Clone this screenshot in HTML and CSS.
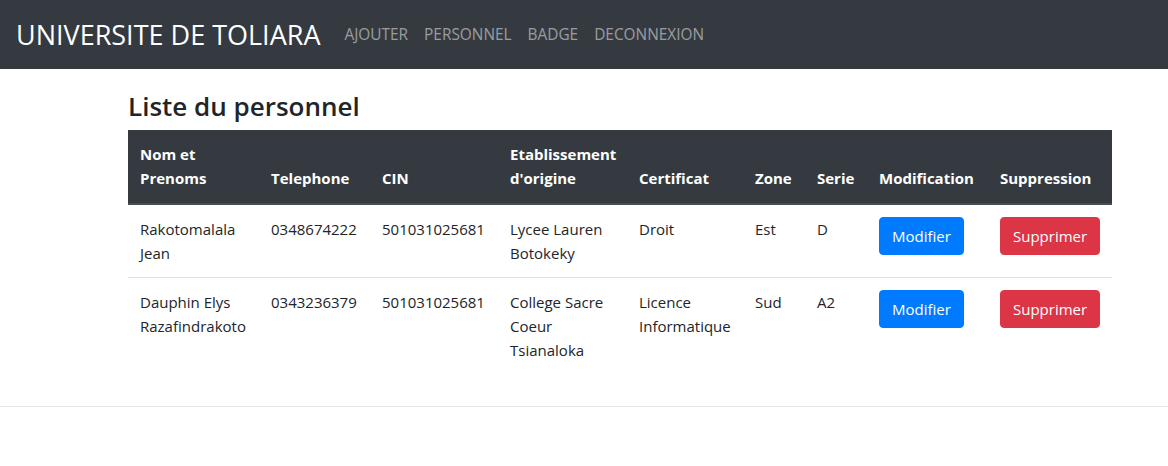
FILE: index.html
```html
<!DOCTYPE html>
<html lang="fr">
<head>
<meta charset="utf-8">
<title>Liste du personnel</title>
<link rel="stylesheet" href="styles.css">
</head>
<body>
<nav class="navbar">
  <a class="brand" href="#">UNIVERSITE DE TOLIARA</a>
  <ul class="nav-links">
    <li><a href="#">AJOUTER</a></li>
    <li><a href="#">PERSONNEL</a></li>
    <li><a href="#">BADGE</a></li>
    <li><a href="#">DECONNEXION</a></li>
  </ul>
</nav>
<main class="content">
  <h3 class="title">Liste du personnel</h3>
  <table class="table">
    <thead>
      <tr>
        <th class="c1">Nom et Prenoms</th>
        <th class="c2">Telephone</th>
        <th class="c3">CIN</th>
        <th class="c4">Etablissement d'origine</th>
        <th class="c5">Certificat</th>
        <th class="c6">Zone</th>
        <th class="c7">Serie</th>
        <th class="c8">Modification</th>
        <th class="c9">Suppression</th>
      </tr>
    </thead>
    <tbody>
      <tr>
        <td>Rakotomalala Jean</td>
        <td>0348674222</td>
        <td>501031025681</td>
        <td>Lycee Lauren Botokeky</td>
        <td>Droit</td>
        <td>Est</td>
        <td>D</td>
        <td><a class="btn btn-primary" href="#">Modifier</a></td>
        <td><a class="btn btn-danger" href="#">Supprimer</a></td>
      </tr>
      <tr>
        <td>Dauphin Elys Razafindrakoto</td>
        <td>0343236379</td>
        <td>501031025681</td>
        <td>College Sacre Coeur Tsianaloka</td>
        <td>Licence Informatique</td>
        <td>Sud</td>
        <td>A2</td>
        <td><a class="btn btn-primary" href="#">Modifier</a></td>
        <td><a class="btn btn-danger" href="#">Supprimer</a></td>
      </tr>
    </tbody>
  </table>
</main>
<hr class="footer-rule">
</body>
</html>
```

FILE: styles.css
```css
* { box-sizing: border-box; }

body {
  margin: 0;
  font-family: "Open Sans", "Noto Sans", "Liberation Sans", sans-serif;
  font-size: 16px;
  line-height: 1.5;
  color: #212529;
  background: #fff;
}

.navbar {
  display: flex;
  align-items: center;
  height: 69px;
  padding: 0 16px;
  background: #343a40;
}

.brand {
  font-size: 27px;
  line-height: 1.3;
  color: #fff;
  text-decoration: none;
  margin-right: 16px;
  white-space: nowrap;
}

.nav-links {
  display: flex;
  list-style: none;
  margin: 0;
  padding: 0;
}

.nav-links a {
  display: block;
  padding: 8px 8px;
  color: rgba(255, 255, 255, 0.5);
  text-decoration: none;
  font-size: 15.4px;
}

.content {
  padding: 22px 0 16px 128px;
}

.title {
  margin: 0 0 8px;
  font-size: 26px;
  font-weight: 600;
  line-height: 1.2;
}

.table {
  width: 984px;
  border-collapse: collapse;
  table-layout: fixed;
  margin-bottom: 0;
  font-size: 15px;
}

.table th,
.table td {
  padding: 12px;
  text-align: left;
  vertical-align: top;
  line-height: 24px;
}

.table thead th {
  vertical-align: bottom;
  padding-bottom: 13px;
  background: #343a40;
  color: #fff;
  font-weight: 700;
  border-bottom: 2px solid #454d55;
}

.table tbody tr + tr td {
  border-top: 1px solid #dee2e6;
}

.c1 { width: 131px; }
.c2 { width: 111px; }
.c3 { width: 128px; }
.c4 { width: 129px; }
.c5 { width: 116px; }
.c6 { width: 62px; }
.c7 { width: 62px; }
.c8 { width: 121px; }
.c9 { width: 124px; }

.btn {
  display: inline-block;
  padding: 6px 12px;
  font-size: 15px;
  line-height: 24px;
  border-radius: 4px;
  color: #fff;
  text-decoration: none;
  border: 1px solid transparent;
  white-space: nowrap;
}

.btn-primary { background: #007bff; border-color: #007bff; }
.btn-danger { background: #dc3545; border-color: #dc3545; }

.footer-rule {
  margin: 16px 0 0;
  border: 0;
  border-top: 1px solid rgba(0, 0, 0, 0.1);
}
```
